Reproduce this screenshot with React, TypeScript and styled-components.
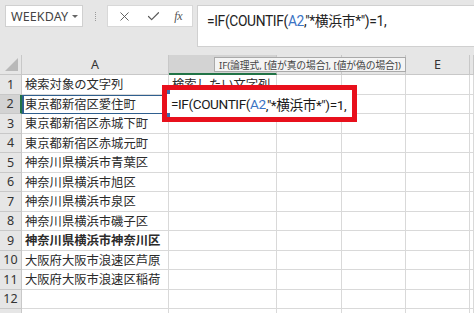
import React from "react";
import styled, { createGlobalStyle } from "styled-components";
import { X, Check } from "lucide-react";

const GlobalStyle = createGlobalStyle`
  body {
    margin: 0;
    background: #ffffff;
    font-family: "Noto Sans", "Noto Sans CJK JP", sans-serif;
  }
`;

const CJK = `"Noto Sans CJK JP", "Noto Sans", sans-serif`;

const Page = styled.div`
  position: relative;
  width: 474px;
  height: 313px;
  overflow: hidden;
  background: #ffffff;
`;

const FormulaBar = styled.div`
  display: flex;
  align-items: flex-start;
  height: 55px;
  padding: 5px 0 0 5px;
  box-sizing: border-box;
  background: #e6e6e6;
`;

const NameBox = styled.div`
  display: flex;
  align-items: center;
  justify-content: space-between;
  width: 78px;
  height: 22px;
  box-sizing: border-box;
  padding: 0 4px 0 5px;
  background: #ffffff;
  border: 1px solid #d0d0d0;
  font-family: "Noto Sans", sans-serif;
  font-size: 12.5px;
  color: #444444;
  letter-spacing: 0.1px;
`;

const Caret = styled.span`
  width: 0;
  height: 0;
  border-left: 3px solid transparent;
  border-right: 3px solid transparent;
  border-top: 3px solid #666666;
  margin-top: 1px;
`;

const Grip = styled.div`
  width: 24px;
  height: 22px;
  display: flex;
  justify-content: center;
  align-items: center;
  &::before {
    content: "";
    width: 0;
    height: 9px;
    border-left: 1.5px dotted #9a9a9a;
  }
`;

const ActionBox = styled.div`
  display: flex;
  align-items: center;
  justify-content: space-between;
  width: 86px;
  height: 22px;
  box-sizing: border-box;
  padding: 0 10px 0 9px;
  background: #ffffff;
  border: 1px solid #d8d8d8;
  color: #5a5a5a;
`;

const Fx = styled.span`
  font-family: "Liberation Serif", serif;
  font-style: italic;
  font-size: 12px;
  color: #555555;
  letter-spacing: -0.5px;
`;

const FormulaInput = styled.div`
  flex: 1;
  margin-left: 4px;
  height: 42px;
  box-sizing: border-box;
  padding: 4px 0 0 9px;
  background: #ffffff;
  border: 1px solid #d0d0d0;
  border-right: none;
  font-family: Roboto, ${CJK};
  font-size: 13.8px;
  letter-spacing: -0.35px;
  color: #222222;
  white-space: nowrap;
`;

const Ref = styled.span`
  color: #3b73c4;
`;

const Sheet = styled.div`
  display: grid;
  grid-template-columns: 22px 147px 108px 65px 64px 64px 1fr;
  grid-auto-rows: 19.5px;
  grid-template-rows: 20px;
`;

const ColHead = styled.div<{ $active?: boolean }>`
  display: flex;
  align-items: center;
  justify-content: center;
  box-sizing: border-box;
  background: ${(p) => (p.$active ? "#d3d3d3" : "#e6e6e6")};
  border-right: 1px solid #c8c8c8;
  border-bottom: ${(p) => (p.$active ? "2px solid #217346" : "1px solid #c8c8c8")};
  font-family: "Noto Sans", sans-serif;
  font-size: 12.5px;
  color: #333333;
`;

const Corner = styled.div`
  position: relative;
  box-sizing: border-box;
  background: #e6e6e6;
  border-right: 1px solid #c8c8c8;
  border-bottom: 1px solid #c8c8c8;
  &::after {
    content: "";
    position: absolute;
    right: 3px;
    bottom: 3px;
    width: 0;
    height: 0;
    border-left: 13px solid transparent;
    border-bottom: 13px solid #b9b9b9;
  }
`;

const RowHead = styled.div<{ $active?: boolean }>`
  display: flex;
  align-items: center;
  justify-content: center;
  box-sizing: border-box;
  background: ${(p) => (p.$active ? "#d3d3d3" : "#e6e6e6")};
  border-right: ${(p) => (p.$active ? "2px solid #217346" : "1px solid #c8c8c8")};
  border-bottom: 1px solid #c8c8c8;
  font-family: "Noto Sans", sans-serif;
  font-size: 12.5px;
  color: #333333;
`;

const Cell = styled.div<{ $bold?: boolean; $ref?: boolean }>`
  display: flex;
  align-items: center;
  box-sizing: border-box;
  padding-left: 3px;
  border-right: 1px solid #d9d9d9;
  border-bottom: 1px solid #d9d9d9;
  overflow: hidden;
  white-space: nowrap;
  font-family: ${CJK};
  font-size: 12.3px;
  font-weight: ${(p) => (p.$bold ? 700 : 400)};
  color: #2a2a2a;
  ${(p) =>
    p.$ref &&
    `
    border: 1px solid #2f5f8f;
    border-left: 2px solid #2f5f8f;
    padding-left: 1px;
  `}
`;

const Tooltip = styled.div`
  position: absolute;
  left: 214px;
  top: 57px;
  height: 15px;
  box-sizing: border-box;
  padding: 0 4px;
  display: flex;
  align-items: center;
  background: #f4f4f4;
  border: 1px solid #aaaaaa;
  font-family: "Noto Sans", ${CJK};
  font-size: 9.8px;
  letter-spacing: -0.1px;
  color: #444444;
  white-space: nowrap;
`;

const RedFrame = styled.div`
  position: absolute;
  left: 162px;
  top: 85px;
  width: 195px;
  height: 37px;
  box-sizing: border-box;
  border: 5px solid #e8101c;
  background: #ffffff;
`;

const Editor = styled.div`
  position: relative;
  height: 100%;
  display: flex;
  align-items: center;
  padding-left: 4px;
  font-family: Roboto, ${CJK};
  font-size: 13.6px;
  letter-spacing: -0.4px;
  color: #1a1a1a;
  white-space: nowrap;
  &::before,
  &::after {
    content: "";
    position: absolute;
    left: 0;
    width: 3px;
    height: 4px;
    background: #3b6fb0;
  }
  &::before {
    top: 0;
  }
  &::after {
    bottom: 0;
  }
`;

const rows: { a?: string; b?: string; bold?: boolean }[] = [
  { a: "検索対象の文字列", b: "検索したい文字列" },
  { a: "東京都新宿区愛住町" },
  { a: "東京都新宿区赤城下町" },
  { a: "東京都新宿区赤城元町" },
  { a: "神奈川県横浜市青葉区" },
  { a: "神奈川県横浜市旭区" },
  { a: "神奈川県横浜市泉区" },
  { a: "神奈川県横浜市磯子区" },
  { a: "神奈川県横浜市神奈川区", bold: true },
  { a: "大阪府大阪市浪速区芦原" },
  { a: "大阪府大阪市浪速区稲荷" },
  {},
  {},
];

const Formula: React.FC = () => (
  <>
    =IF(COUNTIF(<Ref>A2</Ref>,"*横浜市*")=1,
  </>
);

const App: React.FC = () => {
  return (
    <Page>
      <GlobalStyle />
      <FormulaBar>
        <NameBox>
          WEEKDAY
          <Caret />
        </NameBox>
        <Grip />
        <ActionBox>
          <X size={15} strokeWidth={1.5} />
          <Check size={15} strokeWidth={1.9} />
          <Fx>fx</Fx>
        </ActionBox>
        <FormulaInput>
          <Formula />
        </FormulaInput>
      </FormulaBar>
      <Sheet>
        <Corner />
        <ColHead>A</ColHead>
        <ColHead $active />
        <ColHead />
        <ColHead />
        <ColHead>E</ColHead>
        <ColHead />
        {rows.map((r, i) => (
          <React.Fragment key={i}>
            <RowHead $active={i === 1}>{i < 12 ? i + 1 : ""}</RowHead>
            <Cell $bold={r.bold} $ref={i === 1}>
              {r.a}
            </Cell>
            <Cell>{r.b}</Cell>
            <Cell />
            <Cell />
            <Cell />
            <Cell />
          </React.Fragment>
        ))}
      </Sheet>
      <Tooltip>IF(論理式, [値が真の場合], [値が偽の場合])</Tooltip>
      <RedFrame>
        <Editor>
          <Formula />
        </Editor>
      </RedFrame>
    </Page>
  );
};

export default App;
